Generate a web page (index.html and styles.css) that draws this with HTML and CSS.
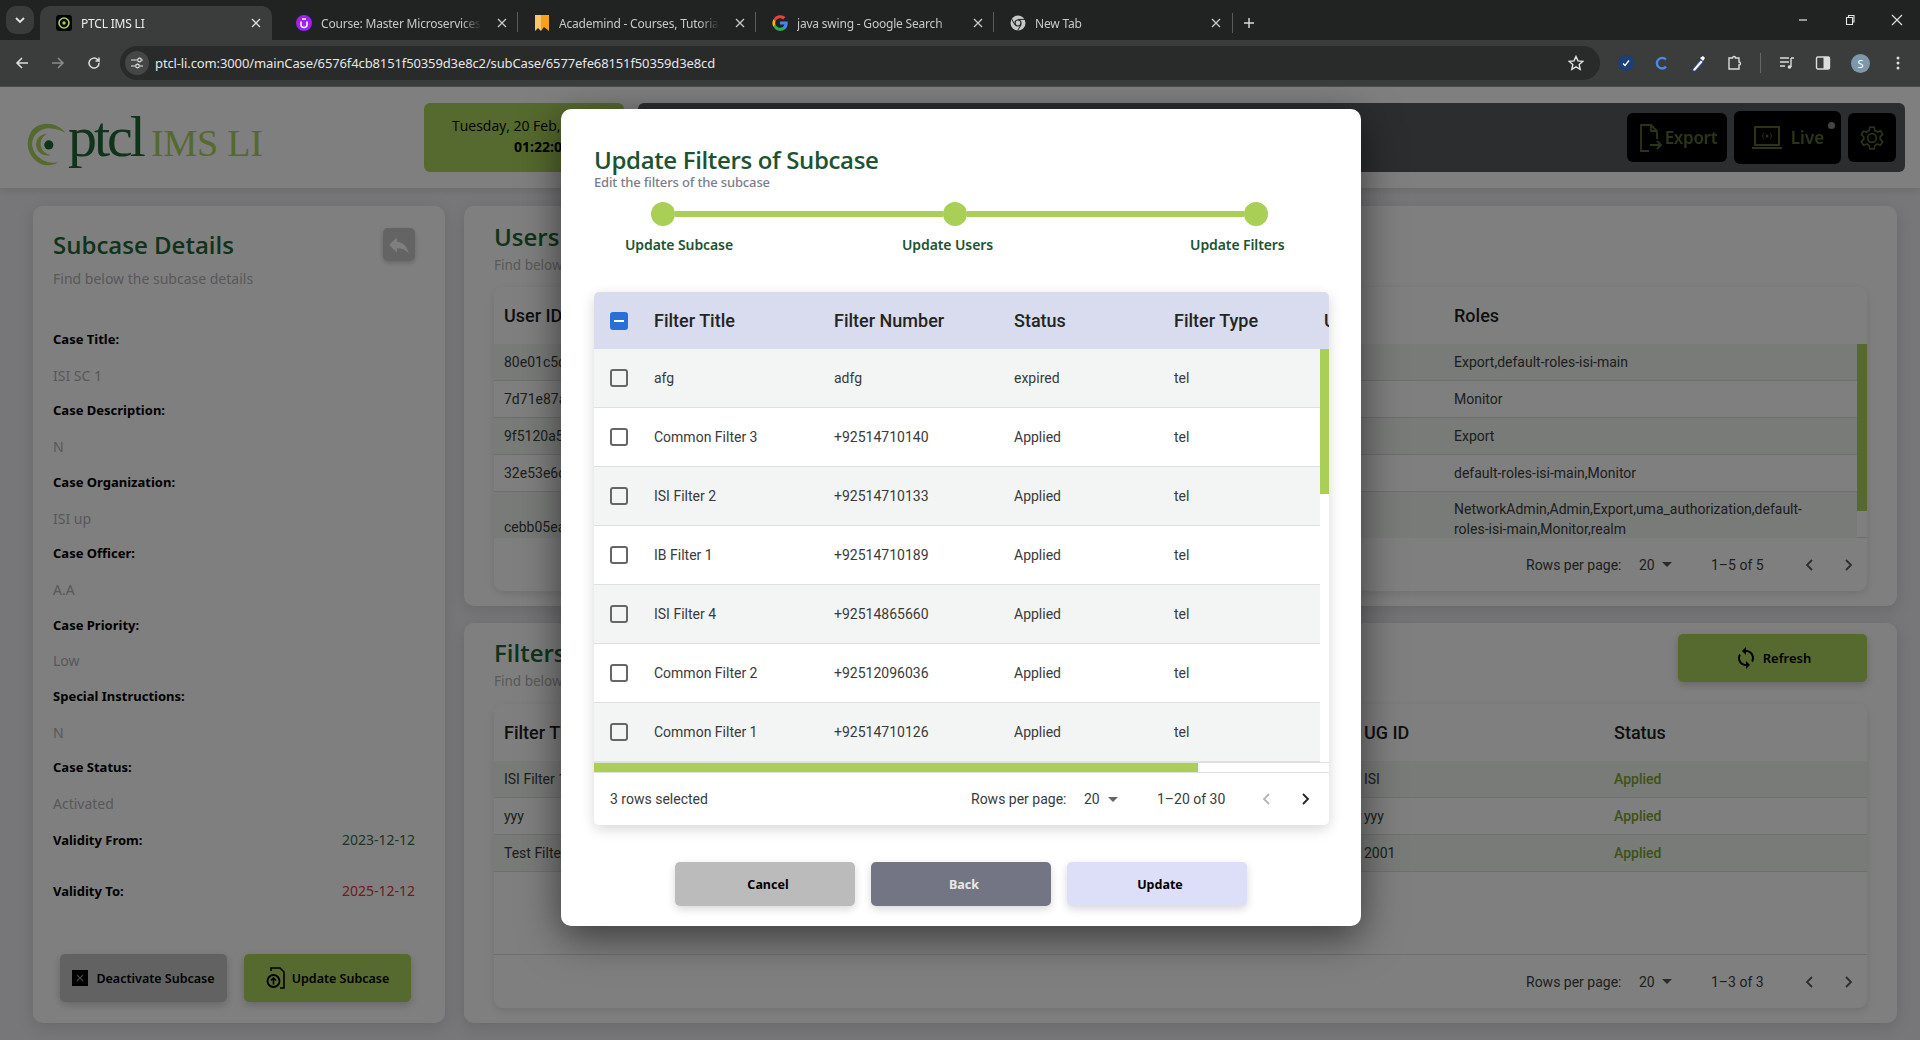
FILE: index.html
```html
<!DOCTYPE html>
<html lang="en">
<head>
<meta charset="utf-8">
<title>PTCL IMS LI</title>
<link rel="stylesheet" href="styles.css">
</head>
<body>
<div class="tabstrip">
  <div class="tab-search"><svg width="12" height="12" viewBox="0 0 12 12"><path d="M2 4l4 4 4-4" fill="none" stroke="#e3e3e3" stroke-width="1.8"/></svg></div>
  <div class="tab active">
    <svg class="fav" viewBox="0 0 16 16"><rect width="16" height="16" rx="3" fill="#050505"/><circle cx="8" cy="8" r="5" fill="none" stroke="#a9d056" stroke-width="1.6"/><circle cx="8" cy="8" r="1.7" fill="#a9d056"/></svg>
    <span class="tab-title">PTCL IMS LI</span>
    <svg class="tab-x" viewBox="0 0 10 10"><path d="M1 1l8 8M9 1l-8 8" stroke="#dcdcdc" stroke-width="1.3"/></svg>
  </div>
  <div class="tab">
    <svg class="fav" viewBox="0 0 16 16"><circle cx="8" cy="8" r="8" fill="#a020f0"/><path d="M5 6.5v3a3 3 0 006 0v-3" fill="none" stroke="#fff" stroke-width="1.6"/><path d="M6 4h4" stroke="#fff" stroke-width="1.4"/></svg>
    <span class="tab-title">Course: Master Microservices with Spring</span>
    <svg class="tab-x" viewBox="0 0 10 10"><path d="M1 1l8 8M9 1l-8 8" stroke="#c8c8c8" stroke-width="1.3"/></svg>
  </div>
  <div class="tab sep">
    <svg class="fav" viewBox="0 0 16 16"><path d="M1 0h14v16l-5-4-3 4V3H1z" fill="#f7a11c"/><path d="M1 0h6v16L4 13l-3 3z" fill="#fbc56a"/></svg>
    <span class="tab-title">Academind - Courses, Tutorials &amp; More</span>
    <svg class="tab-x" viewBox="0 0 10 10"><path d="M1 1l8 8M9 1l-8 8" stroke="#c8c8c8" stroke-width="1.3"/></svg>
  </div>
  <div class="tab sep">
    <svg class="fav" viewBox="0 0 16 16"><path d="M15.7 8.2c0-.6 0-1.1-.1-1.6H8v3h4.4a3.7 3.7 0 01-1.6 2.500v2h2.600c1.500-1.400 2.300-3.400 2.300-5.900z" fill="#4285f4"/><path d="M8 16c2.200 0 4-.7 5.400-2l-2.600-2c-.7.5-1.600.8-2.800.8-2.100 0-3.900-1.400-4.600-3.300H1.300v2.100A8 8 0 008 16z" fill="#34a853"/><path d="M3.400 9.500a4.800 4.800 0 010-3V4.400H1.300a8 8 0 000 7.200z" fill="#fbbc05"/><path d="M8 3.200c1.200 0 2.300.4 3.100 1.200l2.400-2.300A8 8 0 001.300 4.400l2.100 2.100C4.100 4.600 5.900 3.200 8 3.200z" fill="#ea4335"/></svg>
    <span class="tab-title">java swing - Google Search</span>
    <svg class="tab-x" viewBox="0 0 10 10"><path d="M1 1l8 8M9 1l-8 8" stroke="#c8c8c8" stroke-width="1.3"/></svg>
  </div>
  <div class="tab sep">
    <svg class="fav" viewBox="0 0 16 16"><circle cx="8" cy="8" r="7.500" fill="#c7c7c7"/><circle cx="8" cy="8" r="3.600" fill="#212323"/><circle cx="8" cy="8" r="2.400" fill="#c7c7c7"/><path d="M8 4.400h7M4.900 9.800L1.500 3.800M11.100 9.800L7.600 15.500" stroke="#212323" stroke-width="1"/></svg>
    <span class="tab-title">New Tab</span>
    <svg class="tab-x" viewBox="0 0 10 10"><path d="M1 1l8 8M9 1l-8 8" stroke="#c8c8c8" stroke-width="1.3"/></svg>
  </div>
  <div class="tab-divider"></div>
  <svg class="newtab" viewBox="0 0 12 12"><path d="M6 1v10M1 6h10" stroke="#dcdcdc" stroke-width="1.4"/></svg>
  <div class="winctl">
    <svg viewBox="0 0 12 12"><path d="M2 6h8" stroke="#e3e3e3" stroke-width="1.2"/></svg>
    <svg viewBox="0 0 12 12"><path d="M2.500 3.500h6v7h-6zM4.500 3.500v-2h5.500v6.500h-1.500" fill="none" stroke="#e3e3e3" stroke-width="1.100"/></svg>
    <svg viewBox="0 0 12 12"><path d="M1 1l10 10M11 1L1 11" stroke="#e3e3e3" stroke-width="1.100"/></svg>
  </div>
</div>

<div class="toolbar">
  <svg class="tool-ic" viewBox="0 0 16 16"><path d="M14 8H3M8 3L3 8l5 5" fill="none" stroke="#dcdcdc" stroke-width="1.600"/></svg>
  <svg class="tool-ic" viewBox="0 0 16 16"><path d="M2 8h11M8 3l5 5-5 5" fill="none" stroke="#8a8a8a" stroke-width="1.600"/></svg>
  <svg class="tool-ic" viewBox="0 0 16 16"><path d="M13 8a5 5 0 11-1.500-3.500L13 6V2.500M13 6H9.500" fill="none" stroke="#dcdcdc" stroke-width="1.500"/></svg>
  <div class="omnibox">
    <span class="tune"><svg width="14" height="14" viewBox="0 0 14 14"><path d="M1 4h6M10 10h3M1 10h4M12 4h1" stroke="#e3e3e3" stroke-width="1.200"/><circle cx="9.500" cy="4" r="1.800" fill="none" stroke="#e3e3e3" stroke-width="1.200"/><circle cx="7.500" cy="10" r="1.800" fill="none" stroke="#e3e3e3" stroke-width="1.200"/></svg></span>
    <span class="url">ptcl-li.com:3000/mainCase/6576f4cb8151f50359d3e8c2/subCase/6577efe68151f50359d3e8cd</span>
    <svg class="star" viewBox="0 0 16 16"><path d="M8 1.500l2 4.400 4.800.5-3.600 3.200 1 4.700L8 11.900l-4.200 2.400 1-4.700L1.200 6.400 6 5.900z" fill="none" stroke="#e3e3e3" stroke-width="1.400"/></svg>
  </div>
  <div class="ext-icons">
    <svg viewBox="0 0 16 16"><circle cx="8" cy="8" r="8" fill="#1c3f75"/><path d="M5 8.500l2 2 4-5" fill="none" stroke="#fff" stroke-width="1.300"/></svg>
    <svg viewBox="0 0 16 16"><path d="M12 4.500A5 5 0 104.500 12 5 5 0 0012 11.500" fill="none" stroke="#4f86f2" stroke-width="2.400"/></svg>
    <svg viewBox="0 0 16 16"><path d="M3 14l8-9 2 2-8 9H3z" fill="#fff" stroke="#2c4fc0" stroke-width=".8"/><path d="M10 3l3 3 2-3-2-2z" fill="#fff"/></svg>
    <svg viewBox="0 0 16 16"><path d="M3 3h3.500a1.500 1.500 0 013 0H13v4a1.500 1.500 0 010 3v4H3z" fill="none" stroke="#dcdcdc" stroke-width="1.400"/></svg>
    <span class="tb-sep"></span>
    <svg viewBox="0 0 16 16"><path d="M1 3h9M1 7h9M1 11h5M12 3h3M12 3v9" fill="none" stroke="#dcdcdc" stroke-width="1.400"/><circle cx="10.500" cy="12" r="1.800" fill="#dcdcdc"/></svg>
    <svg viewBox="0 0 16 16"><rect x="1.500" y="2" width="13" height="12" rx="1.500" fill="none" stroke="#dcdcdc" stroke-width="1.400"/><rect x="8.500" y="2" width="6" height="12" fill="#dcdcdc"/></svg>
    <span class="avatar">S</span>
    <svg viewBox="0 0 16 16"><circle cx="8" cy="3" r="1.500" fill="#dcdcdc"/><circle cx="8" cy="8" r="1.500" fill="#dcdcdc"/><circle cx="8" cy="13" r="1.500" fill="#dcdcdc"/></svg>
  </div>
</div>

<div class="page">
  <header class="app-head">
    <div class="logo">
      <svg class="logo-mark" viewBox="0 0 48 52"><path d="M44 14C36 2 16 0 7 12-1 24 3 42 18 48c6 2 12 2 18-2C24 48 11 42 8 29 6 18 16 8 28 9c7 .5 12 2 16 5z" fill="#acd25c"/><path d="M24 15c-9 0-14 8-11 16 2 6 9 9 15 7-6-1-11-6-11-12 0-5 3-9 7-11z" fill="#acd25c"/><circle cx="26" cy="27" r="5" fill="#1f6636"/></svg>
      <span class="logo-ptcl">ptcl</span>
      <span class="logo-ims">IMS LI</span>
    </div>
    <div class="datebox">
      <div>Tuesday, 20 Feb, 2024</div>
      <div class="time">01:22:07</div>
    </div>
    <div class="darkbar">
      <div class="dark-btn export">
        <svg width="26" height="34" viewBox="0 0 26 34"><path d="M12 30H4V4h10l6 6v8M14 4v6h6M13 24h11M20 20l4 4-4 4" fill="none" stroke="#acd25c" stroke-width="1.800"/></svg>
        <span>Export</span>
      </div>
      <div class="dark-btn live">
        <svg width="32" height="30" viewBox="0 0 32 30"><rect x="4" y="4" width="24" height="18" fill="none" stroke="#acd25c" stroke-width="2"/><path d="M1 24h30v2H1z" fill="#acd25c"/><circle cx="16" cy="13" r="1.500" fill="#acd25c"/><path d="M13 10a4 4 0 000 6M19 10a4 4 0 010 6" fill="none" stroke="#acd25c"/></svg>
        <span>Live</span>
        <i class="live-dot"></i>
      </div>
      <div class="dark-btn gear">
        <svg width="26" height="26" viewBox="0 0 24 24"><path d="M10 2h4l.6 3 2.400 1.400 2.900-1 2 3.400-2.300 2 0 2.400 2.300 2-2 3.400-2.900-1L14.600 19l-.6 3h-4l-.6-3L7 17.600l-2.900 1-2-3.400 2.300-2V11L2.100 9 4.100 5.600l2.900 1L9.400 5z" fill="none" stroke="#acd25c" stroke-width="1.500" stroke-linejoin="round"/><circle cx="12" cy="12" r="4" fill="none" stroke="#acd25c" stroke-width="1.500"/></svg>
      </div>
    </div>
  </header>

  <main class="app-main">
    <section class="card details">
      <div class="details-top">
        <div>
          <h2 class="card-title">Subcase Details</h2>
          <p class="card-sub detail-sub">Find below the subcase details</p>
        </div>
        <div class="reply-btn"><svg width="26" height="26" viewBox="0 0 24 24"><path d="M10 9V5l-7 7 7 7v-4.100c5 0 8.500 1.600 11 5.100-1-5-4-10-11-11z" fill="#fff"/></svg></div>
      </div>
      <div class="fields">
        <div class="f-label">Case Title:</div><div class="f-value">ISI SC 1</div>
        <div class="f-label">Case Description:</div><div class="f-value">N</div>
        <div class="f-label">Case Organization:</div><div class="f-value">ISI up</div>
        <div class="f-label">Case Officer:</div><div class="f-value">A.A</div>
        <div class="f-label">Case Priority:</div><div class="f-value">Low</div>
        <div class="f-label">Special Instructions:</div><div class="f-value">N</div>
        <div class="f-label">Case Status:</div><div class="f-value">Activated</div>
      </div>
      <div class="validity from"><span class="f-label">Validity From:</span><span class="date-from">2023-12-12</span></div>
      <div class="validity to"><span class="f-label">Validity To:</span><span class="date-to">2025-12-12</span></div>
      <div class="detail-actions">
        <div class="act-btn grey">
          <svg width="16" height="16" viewBox="0 0 16 16"><rect width="16" height="16" fill="#000"/><path d="M5 5l6 6M11 5l-6 6" stroke="#888" stroke-width="1.200"/></svg>
          <span>Deactivate Subcase</span>
        </div>
        <div class="act-btn olive">
          <svg width="20" height="22" viewBox="0 0 20 22"><path d="M5 4V1h9l4 4v16h-4" fill="none" stroke="#000" stroke-width="1.600"/><circle cx="7.500" cy="14" r="6" fill="none" stroke="#000" stroke-width="1.800"/><path d="M7.500 17.500v-6M5 13.500l2.500-2.500 2.500 2.500" fill="none" stroke="#000" stroke-width="1.600"/></svg>
          <span>Update Subcase</span>
        </div>
      </div>
    </section>

    <div class="right-col">
      <section class="card panel users">
        <div class="panel-head">
          <div>
            <h2 class="card-title">Users</h2>
            <p class="card-sub">Find below the users of the subcase</p>
          </div>
        </div>
        <div class="bgtable">
          <div class="bg-row bg-header users-cols"><span>User ID</span><span>User Name</span><span>Roles</span></div>
          <div class="bg-bodywrap">
            <div class="bg-rows">
              <div class="bg-row odd users-cols"><span>80e01c5d-41a7</span><span>user1</span><span>Export,default-roles-isi-main</span></div>
              <div class="bg-row users-cols"><span>7d71e87a-21c4</span><span>user2</span><span>Monitor</span></div>
              <div class="bg-row odd users-cols"><span>9f5120a5-77e1</span><span>user3</span><span>Export</span></div>
              <div class="bg-row users-cols"><span>32e53e6c-90b2</span><span>user4</span><span>default-roles-isi-main,Monitor</span></div>
              <div class="bg-row odd tall users-cols"><span class="low">cebb05ea-12f8</span><span>user5</span><span class="roles-long">NetworkAdmin,Admin,Export,uma_authorization,default-roles-isi-main,Monitor,realm</span></div>
            </div>
            <div class="bg-scroll"><i></i></div>
          </div>
          <div class="bg-foot">
            <span class="rpp">Rows per page:</span><span class="rpp-val">20</span><i class="caret"></i><span class="range">1–5 of 5</span>
            <svg class="chev" viewBox="0 0 10 14"><path d="M8 2L3 7l5 5" fill="none" stroke="#5a5a5a" stroke-width="1.800"/></svg>
            <svg class="chev next" viewBox="0 0 10 14"><path d="M2 2l5 5-5 5" fill="none" stroke="#5a5a5a" stroke-width="1.800"/></svg>
          </div>
        </div>
      </section>

      <section class="card panel filters">
        <div class="panel-head">
          <div>
            <h2 class="card-title">Filters</h2>
            <p class="card-sub">Find below the filters of the subcase</p>
          </div>
          <div class="refresh">
            <svg width="24" height="24" viewBox="0 0 24 24"><path d="M12 4V1L8 5l4 4V6c3.310 0 6 2.690 6 6 0 1.010-.25 1.970-.7 2.800l1.460 1.460C19.540 15.030 20 13.570 20 12c0-4.420-3.580-8-8-8zm0 14c-3.310 0-6-2.690-6-6 0-1.010.25-1.970.7-2.800L5.240 7.740C4.460 8.970 4 10.430 4 12c0 4.420 3.580 8 8 8v3l4-4-4-4v3z" fill="#000"/></svg>
            <span>Refresh</span>
          </div>
        </div>
        <div class="bgtable">
          <div class="bg-row bg-header filters-cols"><span>Filter Title</span><span>UG ID</span><span>Status</span></div>
          <div class="bg-row odd filters-cols"><span>ISI Filter 1</span><span>ISI</span><span class="applied">Applied</span></div>
          <div class="bg-row filters-cols"><span>yyy</span><span>yyy</span><span class="applied">Applied</span></div>
          <div class="bg-row odd filters-cols"><span>Test Filter</span><span>2001</span><span class="applied">Applied</span></div>
          <div class="bg-empty"></div>
          <div class="bg-foot">
            <span class="rpp">Rows per page:</span><span class="rpp-val">20</span><i class="caret"></i><span class="range">1–3 of 3</span>
            <svg class="chev" viewBox="0 0 10 14"><path d="M8 2L3 7l5 5" fill="none" stroke="#5a5a5a" stroke-width="1.800"/></svg>
            <svg class="chev next" viewBox="0 0 10 14"><path d="M2 2l5 5-5 5" fill="none" stroke="#5a5a5a" stroke-width="1.800"/></svg>
          </div>
        </div>
      </section>
    </div>
  </main>

  <div class="scrim"></div>

  <div class="modal">
    <h1 class="modal-title">Update Filters of Subcase</h1>
    <p class="modal-sub">Edit the filters of the subcase</p>
    <div class="stepper">
      <i class="dot"></i><i class="line l1"></i><i class="dot"></i><i class="line l2"></i><i class="dot"></i>
    </div>
    <div class="step-labels">
      <span class="s1">Update Subcase</span><span class="s2">Update Users</span><span class="s3">Update Filters</span>
    </div>

    <div class="grid">
      <div class="grid-head grid-cols">
        <div class="cb-cell"><span class="cb on"><i></i></span></div>
        <div class="hc">Filter Title</div><div class="hc">Filter Number</div><div class="hc">Status</div><div class="hc">Filter Type</div><div class="hc">UG ID</div>
      </div>
      <div class="grid-bodywrap">
        <div class="grid-rows">
          <div class="grid-row alt grid-cols"><div class="cb-cell"><span class="cb"></span></div><div>afg</div><div>adfg</div><div>expired</div><div>tel</div><div>ISI</div></div>
          <div class="grid-row grid-cols"><div class="cb-cell"><span class="cb"></span></div><div>Common Filter 3</div><div>+92514710140</div><div>Applied</div><div>tel</div><div>ISI</div></div>
          <div class="grid-row alt grid-cols"><div class="cb-cell"><span class="cb"></span></div><div>ISI Filter 2</div><div>+92514710133</div><div>Applied</div><div>tel</div><div>ISI</div></div>
          <div class="grid-row grid-cols"><div class="cb-cell"><span class="cb"></span></div><div>IB Filter 1</div><div>+92514710189</div><div>Applied</div><div>tel</div><div>ISI</div></div>
          <div class="grid-row alt grid-cols"><div class="cb-cell"><span class="cb"></span></div><div>ISI Filter 4</div><div>+92514865660</div><div>Applied</div><div>tel</div><div>ISI</div></div>
          <div class="grid-row grid-cols"><div class="cb-cell"><span class="cb"></span></div><div>Common Filter 2</div><div>+92512096036</div><div>Applied</div><div>tel</div><div>ISI</div></div>
          <div class="grid-row alt grid-cols"><div class="cb-cell"><span class="cb"></span></div><div>Common Filter 1</div><div>+92514710126</div><div>Applied</div><div>tel</div><div>ISI</div></div>
        </div>
        <div class="vscroll"><i></i></div>
      </div>
      <div class="hscroll"><i></i></div>
      <div class="grid-foot">
        <span class="selected">3 rows selected</span>
        <span class="m-rpp">Rows per page:</span><span class="m-val">20</span><i class="caret dark"></i><span class="m-range">1–20 of 30</span>
        <svg class="m-chev" viewBox="0 0 10 14"><path d="M8 2L3 7l5 5" fill="none" stroke="#b5b5b5" stroke-width="1.800"/></svg>
        <svg class="m-chev nx" viewBox="0 0 10 14"><path d="M2 2l5 5-5 5" fill="none" stroke="#222" stroke-width="1.800"/></svg>
      </div>
    </div>

    <div class="modal-actions">
      <div class="m-btn cancel">Cancel</div>
      <div class="m-btn back">Back</div>
      <div class="m-btn update">Update</div>
    </div>
  </div>
</div>
</body>
</html>
```

FILE: styles.css
```css
* { box-sizing: border-box; }
html, body { margin: 0; height: 1040px; overflow: hidden; }
body { display: flex; flex-direction: column; font-family: "Noto Sans", "Open Sans", sans-serif; background: #fff; }
h1, h2, p { margin: 0; }
i { display: block; }

/* browser chrome */
.tabstrip { height: 40px; flex: none; background: #212323; display: flex; align-items: flex-end; padding-left: 6px; position: relative; }
.tab-search { width: 28px; height: 28px; margin: 0 6px 6px 0; border-radius: 10px; background: #3a3b3b; display: flex; align-items: center; justify-content: center; }
.tab { width: 238px; height: 34px; display: flex; align-items: center; padding: 0 10px 0 16px; color: #c8c8c8; font-size: 12px; position: relative; }
.tab.active { width: 232px; margin-right: 8px; background: #3b3c3c; border-radius: 10px 10px 0 0; color: #ececec; }
.tab.sep::before, .tab-divider { content: ""; width: 1px; height: 20px; background: #5a5b5b; }
.tab.sep::before { position: absolute; left: -1px; top: 6px; }
.tab-divider { margin-bottom: 7px; }
.fav { width: 16px; height: 16px; flex: none; margin-right: 9px; }
.tab-title { flex: 1; white-space: nowrap; overflow: hidden; letter-spacing: -.2px; -webkit-mask-image: linear-gradient(90deg,#000 88%,transparent); mask-image: linear-gradient(90deg,#000 88%,transparent); }
.tab-x { width: 10px; height: 10px; flex: none; margin-left: 16px; margin-right: 1px; }
.newtab { width: 12px; height: 12px; margin: 0 0 11px 10px; }
.winctl { margin-left: auto; height: 40px; display: flex; align-items: center; gap: 35px; padding-right: 17px; padding-top: 0; align-self: flex-start; }
.winctl svg { width: 12px; height: 12px; }

.toolbar { height: 47px; flex: none; background: #3b3c3c; border-bottom: 1px solid #4c4d4d; display: flex; align-items: center; padding: 0 14px 0 14px; }
.tool-ic { width: 16px; height: 16px; margin-right: 20px; flex: none; }
.omnibox { width: 1480px; height: 34px; margin-left: -2px; border-radius: 17px; background: #292a2a; display: flex; align-items: center; padding-left: 5px; }
.tune { width: 24px; height: 24px; border-radius: 50%; background: #454646; display: flex; align-items: center; justify-content: center; flex: none; }
.url { margin-left: 6px; color: #e6e6e6; font-size: 13px; letter-spacing: -.12px; white-space: nowrap; }
.star { width: 16px; height: 16px; margin-left: auto; margin-right: 16px; }
.ext-icons { display: flex; align-items: center; margin-left: 18px; gap: 20px; }
.ext-icons svg { width: 16px; height: 16px; flex: none; }
.tb-sep { width: 1px; height: 20px; background: #666; margin: 0 -2px; }
.avatar { width: 19px; height: 19px; border-radius: 50%; background: #7e97ab; color: #fff; font-size: 11px; display: flex; align-items: center; justify-content: center; flex: none; }

/* page beneath the dialog */
.page { flex: 1; position: relative; display: flex; flex-direction: column; overflow: hidden; background: #eeeef3; }
.app-head { height: 101px; flex: none; background: #fff; display: flex; padding: 16px 15px 16px 0; box-shadow: 0 2px 8px rgba(0,0,0,.1); position: relative; }
.logo { width: 424px; display: flex; align-items: center; padding-left: 25px; }
.logo-mark { width: 44px; height: 48px; flex: none; margin-top: 12px; }
.logo-ptcl { font-family: "Liberation Serif", serif; font-size: 58px; color: #1f6636; letter-spacing: -3px; line-height: 1; margin-left: -1px; margin-top: -2px; }
.logo-ims { font-family: "Liberation Serif", serif; font-size: 38px; color: #acd25c; margin-left: 8px; margin-top: 10px; letter-spacing: -.2px; white-space: nowrap; }
.datebox { width: 200px; height: 69px; background: #acd25c; border-radius: 6px; text-align: center; color: #000; font-family: "Open Sans", sans-serif; font-size: 14px; line-height: 21px; padding-top: 12px; margin-right: 14px; }
.time { font-weight: 700; padding-left: 36px; }
.darkbar { flex: 1; background: #585a5e; border-radius: 6px; display: flex; align-items: center; justify-content: flex-end; gap: 7px; padding-right: 9px; }
.dark-btn { height: 49px; background: #000; border-radius: 6px; display: flex; align-items: center; justify-content: center; color: #acd25c; font-size: 17px; font-weight: 600; position: relative; opacity: 1; }
.dark-btn span { filter: brightness(.5); }
.dark-btn svg { filter: brightness(.5); }
.export { width: 100px; gap: 2px; letter-spacing: -.3px; }
.live { width: 107px; height: 53px; gap: 8px; }
.gear { width: 48px; }
.live-dot { position: absolute; top: 11px; right: 6px; width: 7px; height: 7px; border-radius: 50%; background: #888; }

.app-main { flex: 1; display: flex; gap: 19px; padding: 18px 23px 17px 33px; min-height: 0; }
.card { background: #fff; border-radius: 10px; box-shadow: 0 4px 16px rgba(0,0,0,.12); }
.card-title { font-family: "Open Sans", sans-serif; font-size: 24px; font-weight: 600; color: #1f6636; line-height: 30px; }
.card-sub { font-size: 14px; color: #b0b0b5; line-height: 20px; }

.details { width: 412px; flex: none; padding: 24px 30px 21px 20px; display: flex; flex-direction: column; }
.details-top { display: flex; justify-content: space-between; height: 92px; }
.detail-sub { margin-top: 9px; }
.reply-btn { width: 32px; height: 33px; margin: -2px 0 0 0; background: #c8c8c8; border-radius: 5px; display: flex; align-items: center; justify-content: center; box-shadow: 0 2px 5px rgba(0,0,0,.2); }
.f-label { font-size: 13px; font-weight: 700; color: #000; }
.fields .f-label, .fields .f-value { line-height: 35.7px; }
.f-value { font-size: 14px; color: #b0b0b5; }
.validity { display: flex; justify-content: space-between; font-size: 14px; line-height: 20px; }
.validity.from { margin-top: 8px; }
.validity.to { margin-top: 31px; }
.date-from { color: #3b6b4a; }
.date-to { color: #e0344a; }
.detail-actions { margin-top: auto; display: flex; gap: 17px; padding-left: 7px; padding-right: 4px; }
.act-btn { width: 167px; height: 48px; border-radius: 5px; display: flex; align-items: center; justify-content: center; gap: 8px; font-size: 12.500px; font-weight: 600; color: #000; box-shadow: 0 3px 8px rgba(0,0,0,.2); white-space: nowrap; }
.act-btn.grey { background: #c4c4c4; }
.act-btn.olive { background: #acd25c; gap: 6px; }

.right-col { flex: 1; display: flex; flex-direction: column; gap: 17px; min-width: 0; }
.panel { padding: 16px 30px 15px 30px; display: flex; flex-direction: column; }
.panel.users { height: 400px; }
.panel.filters { height: 400px; padding-top: 11px; }
.panel-head { display: flex; justify-content: space-between; height: 65px; }
.panel.filters .panel-head { height: 70px; }
.panel.filters .card-title { margin-top: 4px; }
.panel .card-sub { margin-top: 3px; font-size: 13.500px; }
.refresh { width: 189px; height: 48px; background: #acd25c; border-radius: 5px; display: flex; align-items: center; justify-content: center; gap: 5px; font-size: 13px; font-weight: 600; color: #000; box-shadow: 0 3px 8px rgba(0,0,0,.2); }

.bgtable { flex: 1; border-radius: 9px; background: #fff; box-shadow: 0 3px 10px rgba(0,0,0,.12); overflow: hidden; display: flex; flex-direction: column; font-family: Roboto, sans-serif; font-size: 14px; color: #3c3c3c; min-height: 0; }
.bg-header { height: 57px !important; background: #dcdcf5; font-size: 18px; font-weight: 500; color: #1f1f1f; border: 0 !important; }
.bg-row { display: grid; height: 37px; align-items: center; border-bottom: 1px solid #dedede; background: #fff; flex: none; }
.bg-row.odd { background: #f3f6f3; }
.bg-row.tall { height: 46px; border: 0; overflow: hidden; }
.bg-row span { padding-left: 10px; white-space: nowrap; overflow: hidden; }
.users-cols { grid-template-columns: 950px 0 1fr; }
.filters-cols { grid-template-columns: 860px 250px 1fr; }
.bg-bodywrap { display: flex; height: 194px; border-bottom: 1px solid #dedede; flex: none; }
.bg-rows { flex: 1; min-width: 0; }
.bg-scroll { width: 10px; flex: none; }
.bg-scroll i { height: 167px; background: #acd25c; }
.low { align-self: end; line-height: 20px; padding-bottom: 1px; }
.roles-long { white-space: normal !important; line-height: 20px; align-self: end; padding-right: 30px; margin-bottom: -1px; }
.bg-empty { height: 83px; flex: none; border-bottom: 1px solid #dedede; }
.bg-foot { flex: 1; display: flex; align-items: center; position: relative; font-size: 14px; color: #3c3c3c; padding-left: 1032px; }
.rpp { width: 113px; white-space: nowrap; }
.rpp-val { width: 23px; }
.caret { width: 0; height: 0; border-left: 5px solid transparent; border-right: 5px solid transparent; border-top: 5px solid #555; margin-left: 0; }
.range { margin-left: 39px; width: 93px; white-space: nowrap; }
.chev { width: 10px; height: 14px; }
.chev.next { margin-left: 30px; }

.scrim { position: absolute; inset: 0; background: rgba(0,0,0,.5); }

/* dialog */
.modal { position: absolute; left: 561px; top: 22px; width: 800px; height: 817px; background: #fff; border-radius: 10px; box-shadow: 0 11px 40px rgba(0,0,0,.55); padding: 36px 32px 0 33px; }
.modal-title { font-family: "Open Sans", sans-serif; font-size: 24px; font-weight: 600; color: #1d5331; line-height: 30px; letter-spacing: -.35px; }
.modal-sub { font-size: 13px; font-weight: 500; color: #7c7d8c; line-height: 16px; margin-top: -1px; letter-spacing: -.15px; }
.stepper { display: flex; align-items: center; margin: 12px 0 0 57px; height: 24px; }
.dot { width: 24px; height: 24px; border-radius: 50%; background: #a9cf57; flex: none; }
.line { height: 6px; background: #a9cf57; flex: none; }
.l1 { width: 268px; }
.l2 { width: 277px; }
.step-labels { display: flex; margin-top: 9px; font-size: 14px; font-weight: 600; color: #1d5331; line-height: 20px; letter-spacing: -.1px; }
.step-labels span { white-space: nowrap; }
.s1 { margin-left: 31px; }
.s2 { margin-left: 169px; }
.s3 { margin-left: 197px; }

.grid { margin-top: 37px; width: 735px; border-radius: 5px; background: #fff; box-shadow: 0 4px 14px rgba(0,0,0,.16); overflow: hidden; font-family: Roboto, sans-serif; font-size: 14px; color: #3a3a3a; }
.grid-cols { display: grid; grid-template-columns: 50px 180px 180px 160px 150px 150px; width: 870px; align-items: center; }
.grid-cols > div:not(.cb-cell) { padding-left: 10px; white-space: nowrap; }
.grid-head { height: 57px; background: #d9dbee; font-size: 18px; font-weight: 500; color: #242424; }
.hc { position: relative; }
.cb-cell { display: flex; padding-left: 16px; }
.cb { width: 18px; height: 18px; border: 2px solid #666; border-radius: 3px; display: flex; align-items: center; justify-content: center; }
.cb.on { background: #2a6fd6; border-color: #2a6fd6; }
.cb.on i { width: 10px; height: 2px; background: #fff; }
.grid-bodywrap { display: flex; height: 413px; overflow: hidden; }
.grid-rows { width: 726px; overflow: hidden; flex: none; }
.grid-row { height: 59px; background: #fff; border-bottom: 1px solid #e0e0e0; }
.grid-row.alt { background: #f3f5f4; }
.vscroll { flex: 1; background: #fff; }
.vscroll i { height: 145px; background: #a9cf57; }
.hscroll { height: 11px; background: #fff; border-top: 1px solid #e0e0e0; border-bottom: 1px solid #e0e0e0; }
.hscroll i { width: 604px; height: 9px; background: #a9cf57; }
.grid-foot { height: 52px; display: flex; align-items: center; padding-left: 16px; }
.selected { width: 361px; white-space: nowrap; }
.m-rpp { width: 113px; white-space: nowrap; }
.m-val { width: 24px; }
.m-range { margin-left: 39px; width: 104px; white-space: nowrap; }
.caret.dark { border-top-color: #666; }
.m-chev { width: 10px; height: 14px; flex: none; }
.m-chev.nx { margin-left: 30px; }

.modal-actions { display: flex; gap: 16px; margin: 37px 0 0 81px; }
.m-btn { width: 180px; height: 44px; border-radius: 5px; display: flex; align-items: center; justify-content: center; padding-left: 6px; font-size: 12.500px; font-weight: 700; box-shadow: 0 3px 8px rgba(0,0,0,.16); color: #000; }
.cancel { background: #bbbbbb; }
.back { background: #737584; color: #e8e8e8; }
.update { background: #dddef7; }
.applied { color: #7ca52f; font-weight: 500; }
```
